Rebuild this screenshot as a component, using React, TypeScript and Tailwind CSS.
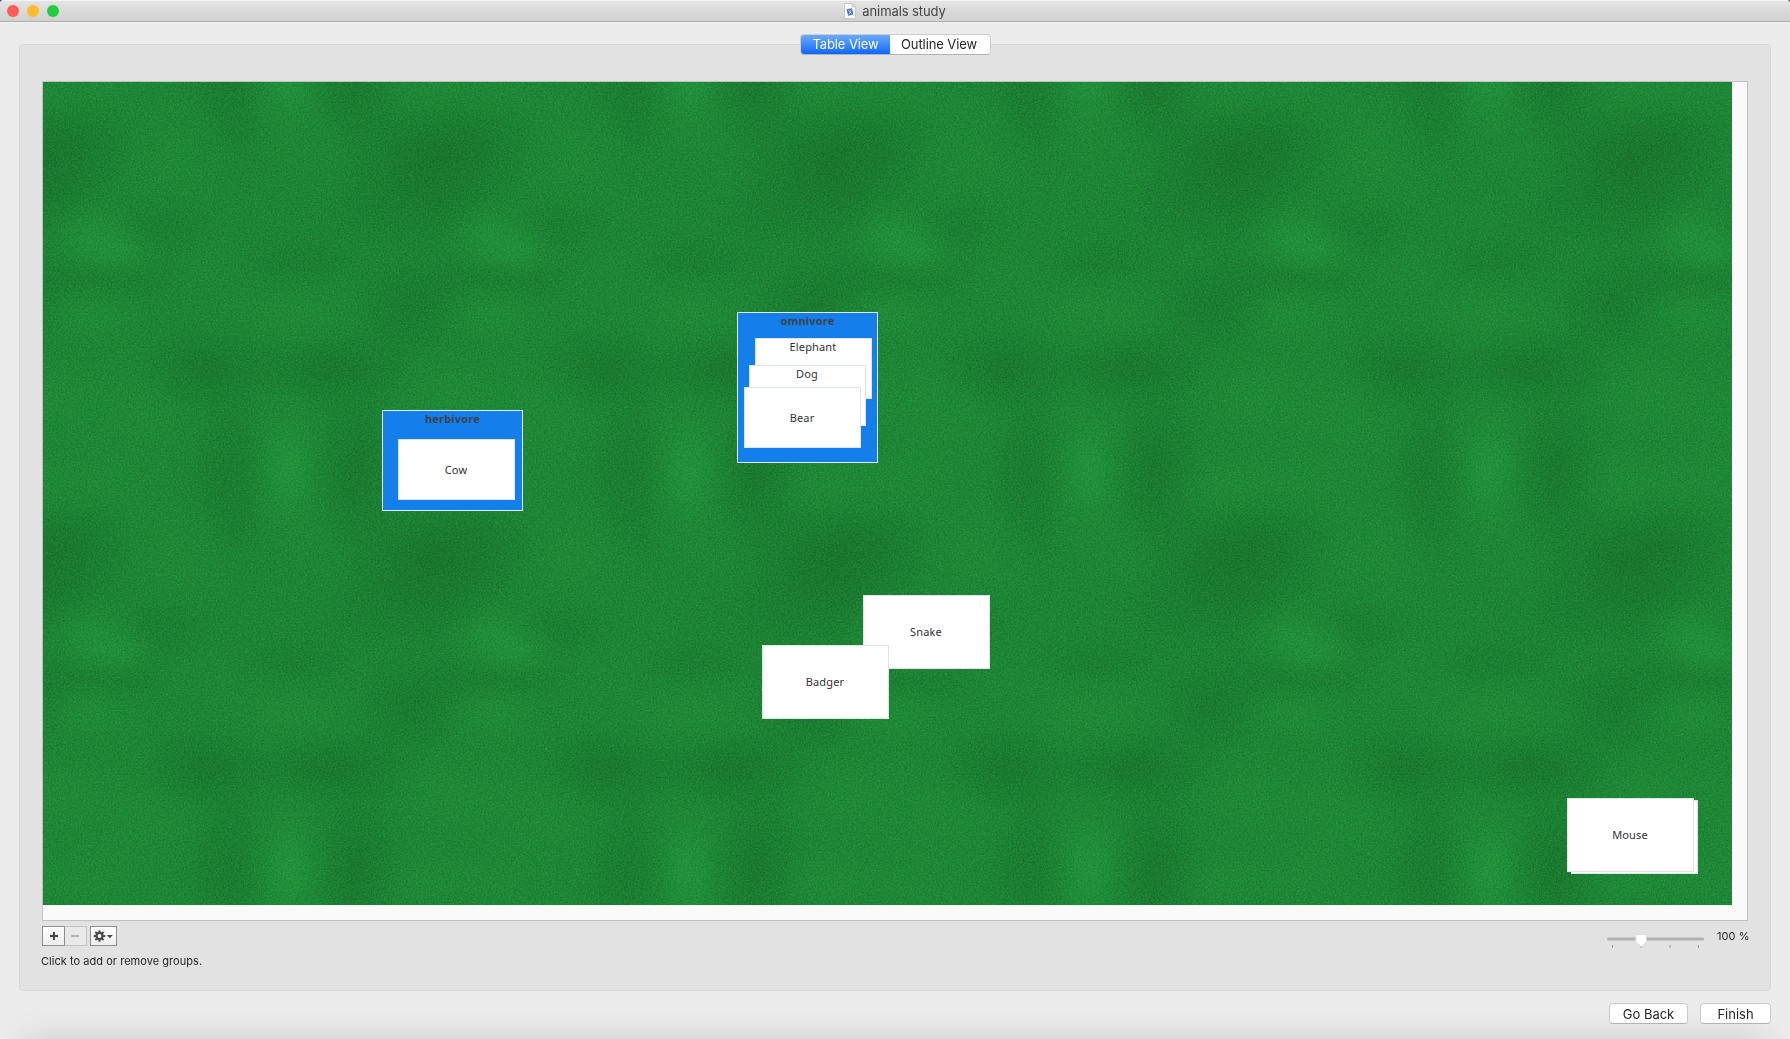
import React from "react";

/* One 400px felt tile: every layer is a soft blob centred in its own wrapping tile. */
type Blob = [x: number, y: number, rx: number, ry: number, tone: "l" | "d", alpha: number];
const BLOBS: Blob[] = [
  [244, 390, 50, 85, "l", 0.4],
  [246, 388, 26, 46, "l", 0.45],
  [74, 170, 44, 26, "l", 0.5],
  [46, 152, 50, 34, "l", 0.45],
  [44, 231, 60, 34, "l", 0.35],
  [50, 6, 70, 44, "l", 0.25],
  [130, 75, 70, 70, "l", 0.2],
  [250, 228, 80, 45, "l", 0.25],
  [150, 185, 60, 45, "l", 0.15],
  [97, 330, 80, 70, "l", 0.22],
  [5, 315, 60, 50, "l", 0.25],
  [380, 5, 55, 45, "l", 0.25],
  [290, 70, 50, 60, "l", 0.12],
  [28, 62, 75, 65, "d", 0.35],
  [378, 80, 75, 60, "d", 0.42],
  [190, 25, 45, 70, "d", 0.22],
  [310, 15, 50, 70, "d", 0.25],
  [340, 125, 80, 50, "d", 0.2],
  [160, 288, 70, 42, "d", 0.45],
  [290, 286, 80, 38, "d", 0.45],
  [374, 225, 65, 48, "d", 0.35],
  [120, 151, 60, 50, "d", 0.22],
  [255, 185, 70, 36, "d", 0.2],
  [188, 375, 42, 65, "d", 0.25],
  [314, 375, 45, 65, "d", 0.3],
  [50, 200, 100, 30, "d", 0.2],
  [5, 130, 50, 50, "d", 0.2],
];

const felt: React.CSSProperties = {
  backgroundColor: "#1d8535",
  backgroundImage: BLOBS.map(([, , rx, ry, tone, a]) => {
    const c = tone === "l" ? "36,153,62" : "22,105,40";
    return `radial-gradient(${rx * 1.25}px ${ry * 1.25}px at center, rgba(${c},${a}), rgba(${c},${a * 0.85}) 20%, rgba(${c},${a * 0.5}) 45%, rgba(${c},${a * 0.14}) 75%, rgba(${c},0))`;
  }).join(","),
  backgroundSize: "400px 400px",
  backgroundPosition: BLOBS.map(([x, y]) => `${x - 200}px ${y - 200}px`).join(","),
};

function Card({ label, className, stacked = false }: { label: string; className: string; stacked?: boolean }) {
  return (
    <div
      className={`absolute flex justify-center border border-[#dfe3ea] bg-white pr-px font-['Noto_Sans',sans-serif] text-[11px] leading-[14px] tracking-[0.15px] text-[#333] ${stacked ? "items-start pt-[1px]" : "items-center"} ${className}`}
    >
      {label}
    </div>
  );
}

function Group({ label, className, children }: { label: string; className: string; children: React.ReactNode }) {
  return (
    <div className={`absolute border border-[#e3eaf3] bg-[#147feb] ${className}`}>
      <div className="text-center font-['Noto_Sans',sans-serif] text-[11px] font-bold leading-4 tracking-[0.2px] text-[#3c4248]">
        {label}
      </div>
      {children}
    </div>
  );
}

function DocIcon() {
  return (
    <svg width="12" height="16" viewBox="0 0 12 16">
      <path d="M.5.5h7.500l3.500 3.500v11.500H.5z" fill="#fafafa" stroke="#b9b9b9" strokeWidth=".7" />
      <path d="M8 .5V4h3.500z" fill="#dcdcdc" stroke="#b9b9b9" strokeWidth=".5" />
      <path d="M2.600 6.200l5.400-1 1.500 6.300-5.400 1.300z" fill="#4377b5" />
      <path d="M4.300 7l3.400 4M7.300 6.700l-2.300 4.800" stroke="#dbe8f6" strokeWidth=".7" />
    </svg>
  );
}

function GearMenuIcon() {
  return (
    <svg width="21" height="14" viewBox="0 0 21 14">
      <g stroke="#484848" strokeWidth="2">
        <path d="M6.500 1.200v11.600M.7 7h11.600M2.400 2.900l8.200 8.200M10.600 2.900l-8.200 8.200" />
      </g>
      <circle cx="6.500" cy="7" r="4.200" fill="#484848" />
      <circle cx="6.500" cy="7" r="1.900" fill="#f5f5f5" />
      <path d="M13.800 6h6L16.800 9.200z" fill="#484848" />
    </svg>
  );
}

function PushButton({ label, className }: { label: string; className: string }) {
  return (
    <button
      className={`h-[21px] rounded-[4px] border border-[#cbcbcb] border-b-[#b3b3b3] bg-white pt-px text-[13px] leading-[18px] text-[#262626] ${className}`}
    >
      {label}
    </button>
  );
}

export default function App() {
  return (
    <div className="bg-[#4a4f7c]">
      <div className="flex h-[1039px] w-[1790px] flex-col overflow-hidden rounded-t-[4px] bg-[#ececec] font-[Inter,sans-serif] text-[#262626]">
        <header className="grid h-[22px] shrink-0 grid-cols-[1fr_auto_1fr] items-center border-b border-t border-b-[#b1b1b1] border-t-[#f4f4f4] bg-linear-to-b from-[#e4e4e4] to-[#d0d0d0]">
          <div className="flex gap-2 pl-[7px]">
            <span className="size-3 rounded-full bg-[#fc5b57]" />
            <span className="size-3 rounded-full bg-[#fdbc2e]" />
            <span className="size-3 rounded-full bg-[#28cb3f]" />
          </div>
          <div className="flex items-center gap-1.5">
            <DocIcon />
            <span className="text-[13px] leading-4 tracking-[-0.1px] text-[#454545]">animals study</span>
          </div>
        </header>

        <main className="mx-[19px] mt-[22px] flex h-[947px] shrink-0 flex-col rounded-[4px] border border-[#d8d8d8] bg-[#e2e2e2] px-[22px]">
          <nav className="mt-[-11px] flex h-[21px] w-[191px] shrink-0 self-center overflow-hidden rounded-[4px] border border-[#cdcdcd] border-b-[#b3b3b3] bg-white text-[13px] leading-[19px]">
            <button className="w-[89px] bg-linear-to-b from-[#6aa9fb] to-[#0a66fc] pl-px tracking-[-0.1px] text-white">
              Table View
            </button>
            <button className="flex-1 pr-px tracking-[-0.1px]">Outline View</button>
          </nav>

          <section className="mt-[26px] h-[840px] w-[1706px] shrink-0 border border-[#c0c0c0] bg-[#fafafa]">
            <div className="relative h-[823px] w-[1689px] overflow-hidden" style={felt}>
              <svg className="absolute inset-0 opacity-15 mix-blend-overlay" width="1689" height="823">
                <filter id="grain" x="0" y="0" width="1" height="1" colorInterpolationFilters="sRGB">
                  <feTurbulence type="fractalNoise" baseFrequency="0.6" numOctaves="2" seed="4" />
                  <feColorMatrix
                    type="matrix"
                    values="1.6 0 0 0 -0.33  1.6 0 0 0 -0.33  1.6 0 0 0 -0.33  0 0 0 0 1"
                  />
                </filter>
                <rect width="1689" height="823" filter="url(#grain)" />
              </svg>

              <Group label="herbivore" className="left-[339px] top-[328px] h-[101px] w-[141px]">
                <Card label="Cow" className="left-[15px] top-[28px] h-[61px] w-[117px]" />
              </Group>
              <Group label="omnivore" className="left-[694px] top-[230px] h-[151px] w-[141px]">
                <Card label="Elephant" stacked className="left-[17px] top-[25px] h-[61px] w-[117px]" />
                <Card label="Dog" stacked className="left-[11px] top-[52px] h-[61px] w-[117px]" />
                <Card label="Bear" className="left-[6px] top-[74px] h-[61px] w-[117px]" />
              </Group>
              <Card label="Snake" className="left-[820px] top-[513px] h-[74px] w-[127px]" />
              <Card label="Badger" className="left-[719px] top-[563px] h-[74px] w-[127px]" />
              <Card label="" className="left-[1528px] top-[718px] h-[74px] w-[127px]" />
              <Card label="Mouse" className="left-[1524px] top-[716px] h-[74px] w-[127px]" />
            </div>
          </section>

          <div className="mt-[5px] flex h-5 w-[1708px] shrink-0">
            <button className="z-10 flex h-5 w-[23px] items-center justify-center border border-[#8e8e8e] bg-linear-to-b from-white to-[#eee]">
              <svg width="10" height="10" viewBox="0 0 10 10">
                <path d="M5 1v8M1 5h8" stroke="#444" strokeWidth="2" />
              </svg>
            </button>
            <button className="-ml-px flex h-5 w-[23px] items-center justify-center border border-[#c2c2c2] bg-[#e9e9e9] pr-0.5">
              <svg width="10" height="10" viewBox="0 0 10 10">
                <path d="M1 5h8" stroke="#a8a8a8" strokeWidth="1.600" />
              </svg>
            </button>
            <button className="ml-[3px] flex h-5 w-[27px] items-center justify-center border border-[#8e8e8e] bg-linear-to-b from-white to-[#eee]">
              <GearMenuIcon />
            </button>
            <svg className="ml-auto mt-2" width="97" height="15" viewBox="0 0 97 15">
              <rect y="3.500" width="97" height="3" rx="1.500" fill="#b1b1b1" />
              <path d="M5.500 11v3M34 11v3M63 11v3M91.500 11v3" stroke="#999" />
              <path d="M28.700 .5h10.800v7L34.100 12.700 28.700 7.500z" fill="#fff" stroke="#d2d2d2" strokeWidth=".6" />
            </svg>
            <span className="ml-[13px] w-[33px] whitespace-nowrap text-[11px] leading-5 tracking-[0.1px]">100 %</span>
          </div>
          <p className="-ml-px mt-[7px] text-[11px] leading-4 tracking-[0.04px]">Click to add or remove groups.</p>
        </main>

        <footer className="flex flex-1 items-start justify-end gap-3 bg-[linear-gradient(to_right,#ececec,transparent_50px,transparent_1740px,#ececec),linear-gradient(to_bottom,#ececec_30%,#e6e6e6_70%,#dadada)] pr-[19px] pt-3">
          <PushButton label="Go Back" className="w-[79px]" />
          <PushButton label="Finish" className="w-[71px]" />
        </footer>
      </div>
    </div>
  );
}
